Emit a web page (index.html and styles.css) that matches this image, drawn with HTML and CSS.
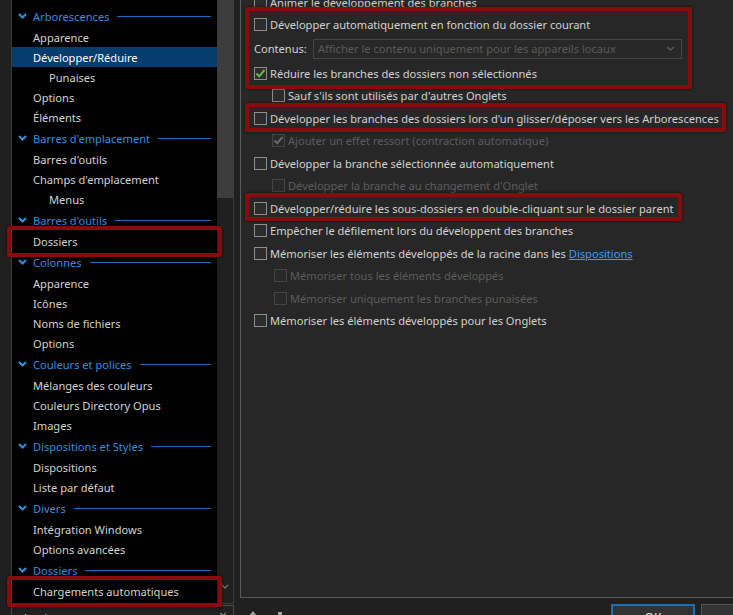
FILE: index.html
```html
<!DOCTYPE html>
<html lang="fr">
<head>
    <meta charset="UTF-8">
    <title>Configuration - Arborescences</title>
    <link rel="stylesheet" href="styles.css">
</head>
<body>
    <div class="window">
        <div class="side">
            <div class="tree">
                <ul class="tree-list">
                    <li class="group"><svg class="chev" width="9" height="6" viewBox="0 0 9 6"><path d="M1 1 L4.5 4.5 L8 1"/></svg><span>Arborescences</span><i class="rule"></i></li>
                    <li class="item">Apparence</li>
                    <li class="item selected">Développer/Réduire</li>
                    <li class="item sub">Punaises</li>
                    <li class="item">Options</li>
                    <li class="item">Éléments</li>
                    <li class="group"><svg class="chev" width="9" height="6" viewBox="0 0 9 6"><path d="M1 1 L4.5 4.5 L8 1"/></svg><span>Barres d'emplacement</span><i class="rule"></i></li>
                    <li class="item">Barres d'outils</li>
                    <li class="item">Champs d'emplacement</li>
                    <li class="item sub">Menus</li>
                    <li class="group"><svg class="chev" width="9" height="6" viewBox="0 0 9 6"><path d="M1 1 L4.5 4.5 L8 1"/></svg><span>Barres d'outils</span><i class="rule"></i></li>
                    <li class="item">Dossiers</li>
                    <li class="group"><svg class="chev" width="9" height="6" viewBox="0 0 9 6"><path d="M1 1 L4.5 4.5 L8 1"/></svg><span>Colonnes</span><i class="rule"></i></li>
                    <li class="item">Apparence</li>
                    <li class="item">Icônes</li>
                    <li class="item">Noms de fichiers</li>
                    <li class="item">Options</li>
                    <li class="group"><svg class="chev" width="9" height="6" viewBox="0 0 9 6"><path d="M1 1 L4.5 4.5 L8 1"/></svg><span>Couleurs et polices</span><i class="rule"></i></li>
                    <li class="item">Mélanges des couleurs</li>
                    <li class="item">Couleurs Directory Opus</li>
                    <li class="item">Images</li>
                    <li class="group"><svg class="chev" width="9" height="6" viewBox="0 0 9 6"><path d="M1 1 L4.5 4.5 L8 1"/></svg><span>Dispositions et Styles</span><i class="rule"></i></li>
                    <li class="item">Dispositions</li>
                    <li class="item">Liste par défaut</li>
                    <li class="group"><svg class="chev" width="9" height="6" viewBox="0 0 9 6"><path d="M1 1 L4.5 4.5 L8 1"/></svg><span>Divers</span><i class="rule"></i></li>
                    <li class="item">Intégration Windows</li>
                    <li class="item">Options avancées</li>
                    <li class="group"><svg class="chev" width="9" height="6" viewBox="0 0 9 6"><path d="M1 1 L4.5 4.5 L8 1"/></svg><span>Dossiers</span><i class="rule"></i></li>
                    <li class="item">Chargements automatiques</li>
                </ul>
                <div class="scrollbar">
                    <div class="thumb"></div>
                    <svg class="scroll-down" width="8" height="5" viewBox="0 0 8 5"><path d="M1 1 L4 4 L7 1"/></svg>
                </div>
            </div>
            <div class="search">
                <span>dossiers</span>
                <span class="clear">×</span>
            </div>
        </div>

        <div class="main">
            <div class="panel">
                <div class="options">
                    <label class="opt"><span class="box"></span>Animer le développement des branches</label>
                    <label class="opt"><span class="box"></span>Développer automatiquement en fonction du dossier courant</label>
                    <div class="opt combo-row">
                        <span class="combo-label">Contenus:</span>
                        <div class="combo">
                            <span>Afficher le contenu uniquement pour les appareils locaux</span>
                            <svg width="9" height="5" viewBox="0 0 9 5"><path d="M1 1 L4.5 4 L8 1"/></svg>
                        </div>
                    </div>
                    <label class="opt"><span class="box"><svg class="tick" width="11" height="11" viewBox="0 0 11 11"><path d="M1.5 5.5 L4.2 8.3 L9.5 2"/></svg></span>Réduire les branches des dossiers non sélectionnés</label>
                    <label class="opt sub"><span class="box"></span>Sauf s'ils sont utilisés par d'autres Onglets</label>
                    <label class="opt"><span class="box"></span>Développer les branches des dossiers lors d'un glisser/déposer vers les Arborescences</label>
                    <label class="opt sub disabled"><span class="box"><svg class="tick" width="11" height="11" viewBox="0 0 11 11"><path d="M1.5 5.5 L4.2 8.3 L9.5 2"/></svg></span>Ajouter un effet ressort (contraction automatique)</label>
                    <label class="opt"><span class="box"></span>Développer la branche sélectionnée automatiquement</label>
                    <label class="opt sub disabled"><span class="box"></span>Développer la branche au changement d'Onglet</label>
                    <label class="opt"><span class="box"></span>Développer/réduire les sous-dossiers en double-cliquant sur le dossier parent</label>
                    <label class="opt"><span class="box"></span>Empêcher le défilement lors du développent des branches</label>
                    <label class="opt"><span class="box"></span>Mémoriser les éléments développés de la racine dans les&nbsp;<a href="#">Dispositions</a></label>
                    <label class="opt sub deep disabled"><span class="box"></span>Mémoriser tous les éléments développés</label>
                    <label class="opt sub deep disabled"><span class="box"></span>Mémoriser uniquement les branches punaisées</label>
                    <label class="opt"><span class="box"></span>Mémoriser les éléments développés pour les Onglets</label>
                </div>
            </div>
            <div class="footer">
                <span class="tool-up"></span>
                <span class="tool-down"></span>
                <button class="btn btn-ok">OK</button>
                <button class="btn btn-cancel">Annuler</button>
            </div>
        </div>

        <!-- annotations -->
        <div class="mark mark-dossiers"></div>
        <div class="mark mark-auto"></div>
        <div class="mark mark-courant"></div>
        <div class="mark mark-drag"></div>
        <div class="mark mark-dbl"></div>
    </div>
</body>
</html>
```

FILE: styles.css
```css
* {
    box-sizing: border-box;
}
body {
    margin: 0;
    width: 733px;
    height: 615px;
    overflow: hidden;
    background: #202020;
    font-family: "Noto Sans", "Open Sans", sans-serif;
    font-size: 11.1px;
    color: #d2d2d2;
}
.window {
    position: relative;
    display: flex;
    height: 615px;
    overflow: hidden;
}

/* left tree */
.side {
    width: 234px;
    padding-left: 11px;
    flex-shrink: 0;
}
.tree {
    height: 604px;
    display: flex;
    border: 1px solid #3c3c3c;
    border-top: none;
}
.tree-list {
    list-style: none;
    margin: 0;
    padding: 5px 0 0;
    flex: 1;
    background: #000;
    overflow: hidden;
}
.tree-list li {
    display: flex;
    align-items: center;
    white-space: nowrap;
}
.group {
    height: 22px;
    padding-left: 6px;
    color: #2f8fe0;
}
.chev {
    fill: none;
    stroke: #2f8fe0;
    stroke-width: 2;
    margin-right: 6px;
}
.rule {
    flex: 1;
    height: 1px;
    background: #1d6cb8;
    margin: 0 6px 0 8px;
}
.item {
    height: 20px;
    padding-left: 21px;
}
.item.sub {
    padding-left: 37px;
}
.item.selected {
    background: #043d6e;
    color: #fff;
}
.scrollbar {
    position: relative;
    width: 16px;
    background: #202020;
}
.thumb {
    height: 198px;
    background: #3d3d3d;
}
.scroll-down {
    position: absolute;
    left: 4px;
    bottom: 14px;
    fill: none;
    stroke: #6a6a6a;
    stroke-width: 1.5;
}
.search {
    margin-top: 1px;
    height: 24px;
    border: 1px solid #4a4a4a;
    display: flex;
    justify-content: space-between;
    padding: 4px 6px 0 8px;
    color: #d8d8d8;
}
.clear {
    color: #9a9a9a;
    font-size: 14px;
    line-height: 12px;
}

/* right side */
.main {
    flex: 1;
    margin-left: 6px;
    display: flex;
    flex-direction: column;
    min-width: 0;
}
.panel {
    height: 598px;
    flex-shrink: 0;
    background: #272727;
    border-left: 1px solid #5a5a5a;
    border-bottom: 1px solid #5a5a5a;
    overflow: hidden;
}
.options {
    margin-top: -9.25px;
    padding-left: 13px;
}
.opt {
    display: flex;
    align-items: center;
    height: 22.5px;
    white-space: nowrap;
}
.box {
    width: 13px;
    height: 13px;
    margin-right: 3px;
    border: 1px solid #8e8e8e;
    background: #2c2c2c;
    flex-shrink: 0;
    display: flex;
    align-items: center;
    justify-content: center;
}
.tick {
    fill: none;
    stroke: #5cbd4a;
    stroke-width: 2;
}
.opt.sub {
    padding-left: 18px;
}
.opt.sub.deep {
    padding-left: 20px;
}
.opt.disabled {
    color: #5c5c5c;
}
.opt.disabled .box {
    border-color: #454545;
    background: #292929;
}
.opt.disabled .tick {
    stroke: #6a6a6a;
}
.opt a {
    color: #3d9df5;
}
.combo-row {
    height: 26px;
}
.combo-label {
    width: 59px;
}
.combo {
    width: 369px;
    height: 20px;
    border: 1px solid #454545;
    background: #282828;
    color: #5a5a5a;
    display: flex;
    align-items: center;
    justify-content: space-between;
    padding: 0 6px 0 4px;
}
.combo svg {
    fill: none;
    stroke: #5e5e5e;
    stroke-width: 1.2;
}
.footer {
    width: 571px;
    display: flex;
    align-items: flex-start;
    padding-top: 6px;
}
.tool-up {
    margin: 7px 0 0 9px;
    width: 0;
    height: 0;
    border-left: 4px solid transparent;
    border-right: 4px solid transparent;
    border-bottom: 5px solid #a0a0a0;
}
.tool-down {
    margin: 8px 0 0 21px;
    width: 4px;
    height: 5px;
    background: #a0a0a0;
}
.btn {
    height: 26px;
    margin-left: 6px;
    flex-shrink: 0;
    background: #333;
    border: 1px solid #555;
    color: #e0e0e0;
    font-family: inherit;
    font-size: 12px;
}
.btn-ok {
    width: 84px;
    margin-left: auto;
    border: 2px solid #1f6fb2;
}
.btn-cancel {
    width: 110px;
}

/* red highlight frames */
.mark {
    position: absolute;
    border: 4px solid #8a0b0b;
    border-radius: 3px;
    box-shadow: 0 0 3px rgba(0,0,0,0.7);
    pointer-events: none;
}
.mark-dossiers { left: 7px; top: 226px; width: 215px; height: 31px; }
.mark-auto { left: 7px; top: 576px; width: 215px; height: 31px; }
.mark-courant { left: 245px; top: 7px; width: 447px; height: 82px; }
.mark-drag { left: 245px; top: 103px; width: 481px; height: 29px; }
.mark-dbl { left: 245px; top: 193px; width: 437px; height: 28px; }
```
